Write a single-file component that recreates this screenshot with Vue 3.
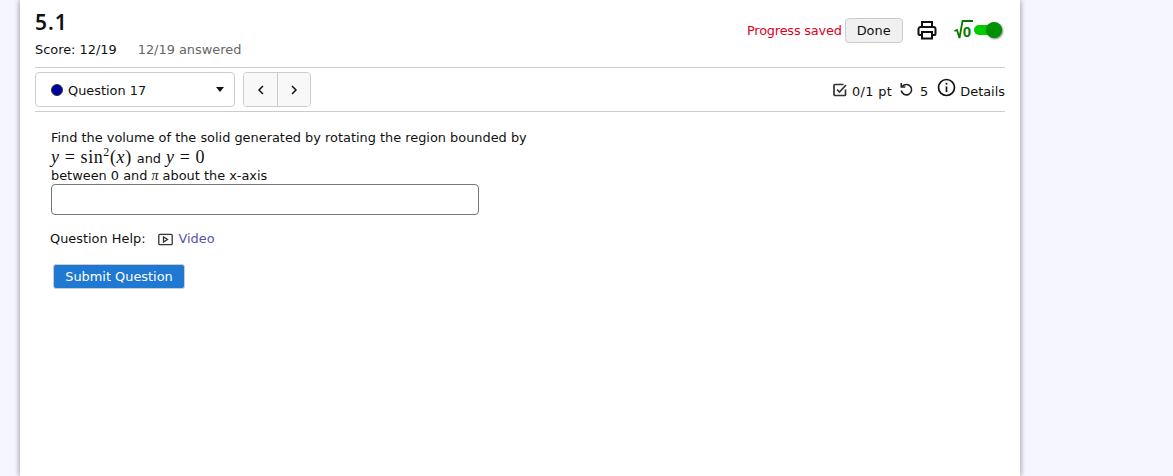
<template>
  <div class="page">
    <main class="card">
      <header class="head">
        <div class="head__left">
          <h1 class="title">5.1</h1>
          <div class="score">
            <span>Score: 12/19</span>
            <span class="score__answered">12/19 answered</span>
          </div>
        </div>
        <div class="head__right">
          <span class="saved">Progress saved</span>
          <button type="button" class="done">Done</button>
          <svg class="print" width="20" height="20" viewBox="0 0 20 20" fill="none" stroke="#111" stroke-width="2">
            <path d="M5 7V2h10v5" />
            <path d="M5 15H2.500a1 1 0 0 1-1-1V9a2 2 0 0 1 2-2h13a2 2 0 0 1 2 2v5a1 1 0 0 1-1 1H15" />
            <rect x="5" y="12" width="10" height="6.500" />
          </svg>
          <span class="sqrt">
            <svg width="20" height="20" viewBox="0 0 20 20" fill="none" stroke="#007a00" stroke-width="1.800">
              <path d="M0.500 11l2.500-1 2.500 8L8.500 1H19" />
            </svg>
            <span class="sqrt__zero">0</span>
          </span>
          <span class="toggle"><span class="toggle__knob"></span></span>
        </div>
      </header>

      <nav class="bar">
        <div class="picker">
          <span class="picker__dot"></span>
          <span class="picker__label">Question 17</span>
          <span class="picker__caret"></span>
        </div>
        <div class="pager">
          <button type="button" class="pager__btn">
            <svg width="8" height="10" viewBox="0 0 8 10" fill="none" stroke="#111" stroke-width="1.500"><path d="M6 1L2 5l4 4" /></svg>
          </button>
          <button type="button" class="pager__btn">
            <svg width="8" height="10" viewBox="0 0 8 10" fill="none" stroke="#111" stroke-width="1.500"><path d="M2 1l4 4-4 4" /></svg>
          </button>
        </div>
        <div class="meta">
          <svg width="14" height="14" viewBox="0 0 14 14" fill="none" stroke="#333" stroke-width="1.700">
            <path d="M12.500 6.500v5a1 1 0 0 1-1 1H2a1 1 0 0 1-1-1V2.500a1 1 0 0 1 1-1h8.500" />
            <path d="M4 6.500l2.500 2.500 6.500-7" />
          </svg>
          <span class="meta__pts">0/1 pt</span>
          <svg class="meta__retry" width="15" height="15" viewBox="0 0 15 15" fill="none" stroke="#222" stroke-width="1.600">
            <path d="M3.300 4.500A5.200 5.200 0 1 1 2.300 8.500" />
            <path d="M2.300 1v4h4" />
          </svg>
          <span class="meta__text">5</span>
          <svg class="meta__info" width="19" height="19" viewBox="0 0 19 19" fill="none" stroke="#111" stroke-width="1.700">
            <circle cx="9.500" cy="9.500" r="8" />
            <path d="M9.500 8.500v5.500" />
            <path d="M9.500 4.800v1.800" />
          </svg>
          <span class="meta__text">Details</span>
        </div>
      </nav>

      <section class="question">
        <div class="prompt">
          <div>Find the volume of the solid generated by rotating the region bounded by</div>
          <div class="formula">
            <span class="math"><i>y</i> = sin<sup>2</sup>(<i>x</i>)</span>
            <span>and</span>
            <span class="math"><i>y</i> = 0</span>
          </div>
          <div class="prompt__last">between 0 and <i class="pi">π</i> about the x-axis</div>
        </div>
        <input class="answer" type="text" />
        <div class="help">
          <span>Question Help:</span>
          <svg width="15" height="13" viewBox="0 0 15 13" fill="none" stroke="#333" stroke-width="1.300">
            <rect x="0.800" y="1.300" width="13.400" height="10.400" rx="1" />
            <path d="M5.500 4v5l4-2.500z" />
          </svg>
          <a class="help__link">Video</a>
        </div>
        <button type="button" class="submit">Submit Question</button>
      </section>
    </main>
  </div>
</template>

<script setup>
</script>

<style>
html,
body {
  margin: 0;
  background: #f6f6ff;
}
</style>

<style scoped>
.page {
  height: 476px;
  overflow: hidden;
  padding-left: 20px;
  font-family: "DejaVu Sans", "Noto Sans", sans-serif;
  font-size: 12.9px;
  color: #111;
}

.card {
  box-sizing: border-box;
  width: 1000px;
  height: 476px;
  padding: 0 15px;
  background: #fff;
  box-shadow: 0 0 6px rgba(0, 0, 0, 0.45);
}

.head {
  display: flex;
  justify-content: space-between;
  height: 67px;
  border-bottom: 1px solid #ccc;
}

.title {
  margin: 0;
  padding-top: 8px;
  font-family: "Noto Sans", sans-serif;
  font-size: 21px;
  line-height: 29px;
  font-weight: 600;
  letter-spacing: 1px;
}

.score {
  display: flex;
  gap: 21px;
  margin-top: 4px;
  line-height: 18px;
}

.score__answered {
  color: #666;
}

.head__right {
  display: flex;
  align-items: center;
  height: 60px;
  padding-right: 3px;
}

.saved {
  color: #e00020;
  letter-spacing: -0.2px;
}

.done {
  width: 58px;
  height: 25px;
  margin-left: 3px;
  padding: 0;
  border: 1px solid #ccc;
  border-radius: 4px;
  background: #f0f0f0;
  font: inherit;
  color: #111;
}

.print {
  margin-left: 14px;
}

.sqrt {
  display: flex;
  align-items: center;
  margin-left: 17px;
}

.sqrt__zero {
  margin-left: -11px;
  margin-top: 3px;
  font-family: "Liberation Sans", sans-serif;
  font-size: 15px;
  font-weight: 700;
  color: #007a00;
}

.toggle {
  display: flex;
  align-items: center;
  justify-content: flex-end;
  box-sizing: border-box;
  width: 28px;
  height: 10px;
  margin-left: 3px;
  border-radius: 5px;
  background: #00cc00;
}

.toggle__knob {
  flex: none;
  width: 16px;
  height: 16px;
  border-radius: 50%;
  background: #009000;
  box-shadow: 1px 1px 2px rgba(0, 0, 0, 0.5);
}

.bar {
  display: flex;
  align-items: center;
  height: 43px;
  border-bottom: 1px solid #ccc;
}

.picker {
  display: flex;
  align-items: center;
  box-sizing: border-box;
  width: 200px;
  height: 35px;
  padding: 0 10px 0 15px;
  border: 1px solid #ccc;
  border-radius: 4px;
}

.picker__dot {
  width: 12px;
  height: 12px;
  border: 1px solid #333;
  border-radius: 50%;
  background: #00009c;
  box-sizing: border-box;
}

.picker__label {
  margin-left: 5px;
  padding-top: 1px;
}

.picker__caret {
  margin-left: auto;
  border-top: 5px solid #111;
  border-left: 4px solid transparent;
  border-right: 4px solid transparent;
}

.pager {
  display: flex;
  margin-left: 8px;
  height: 35px;
  border: 1px solid #ccc;
  border-radius: 4px;
  overflow: hidden;
  box-sizing: border-box;
}

.pager__btn {
  display: flex;
  align-items: center;
  justify-content: center;
  width: 33px;
  padding: 0;
  border: 0;
  background: #f8f8f8;
}

.pager__btn + .pager__btn {
  border-left: 1px solid #ccc;
}

.meta {
  display: flex;
  align-items: center;
  margin-left: auto;
  color: #111;
}

.meta__pts {
  margin-left: 5px;
  padding-top: 3px;
  letter-spacing: 0.35px;
}

.meta__text {
  padding-top: 3px;
}

.meta__retry {
  margin: 0 6px 0 7px;
}

.meta__info {
  margin: -5px 4px 0 9px;
}

.question {
  padding: 17px 16px 0;
}

.prompt {
  line-height: 18px;
}

.prompt__last {
  line-height: 17px;
}

.formula {
  display: flex;
  gap: 5px;
  align-items: baseline;
  height: 20px;
  line-height: 20px;
}

.math {
  font-family: "Liberation Serif", serif;
  font-size: 18px;
  letter-spacing: 0.6px;
}

.math sup {
  font-size: 12px;
  line-height: 0;
}

.pi {
  font-family: "Liberation Serif", serif;
  font-size: 14px;
}

.answer {
  display: block;
  box-sizing: border-box;
  width: 428px;
  height: 31px;
  margin-top: 0;
  border: 1px solid #777;
  border-radius: 4px;
  background: #fff;
}

.help {
  display: flex;
  align-items: center;
  gap: 5px;
  margin: 15px 0 0 -1px;
  line-height: 18px;
}

.help svg {
  margin-left: 8px;
}

.help__link {
  color: #5555aa;
}

.submit {
  display: block;
  box-sizing: border-box;
  width: 132px;
  height: 25px;
  margin: 16px 0 0 2px;
  padding: 0;
  border: 1px solid #ccc;
  border-radius: 3px;
  background: #1f78d1;
  font: inherit;
  color: #fff;
}
</style>
